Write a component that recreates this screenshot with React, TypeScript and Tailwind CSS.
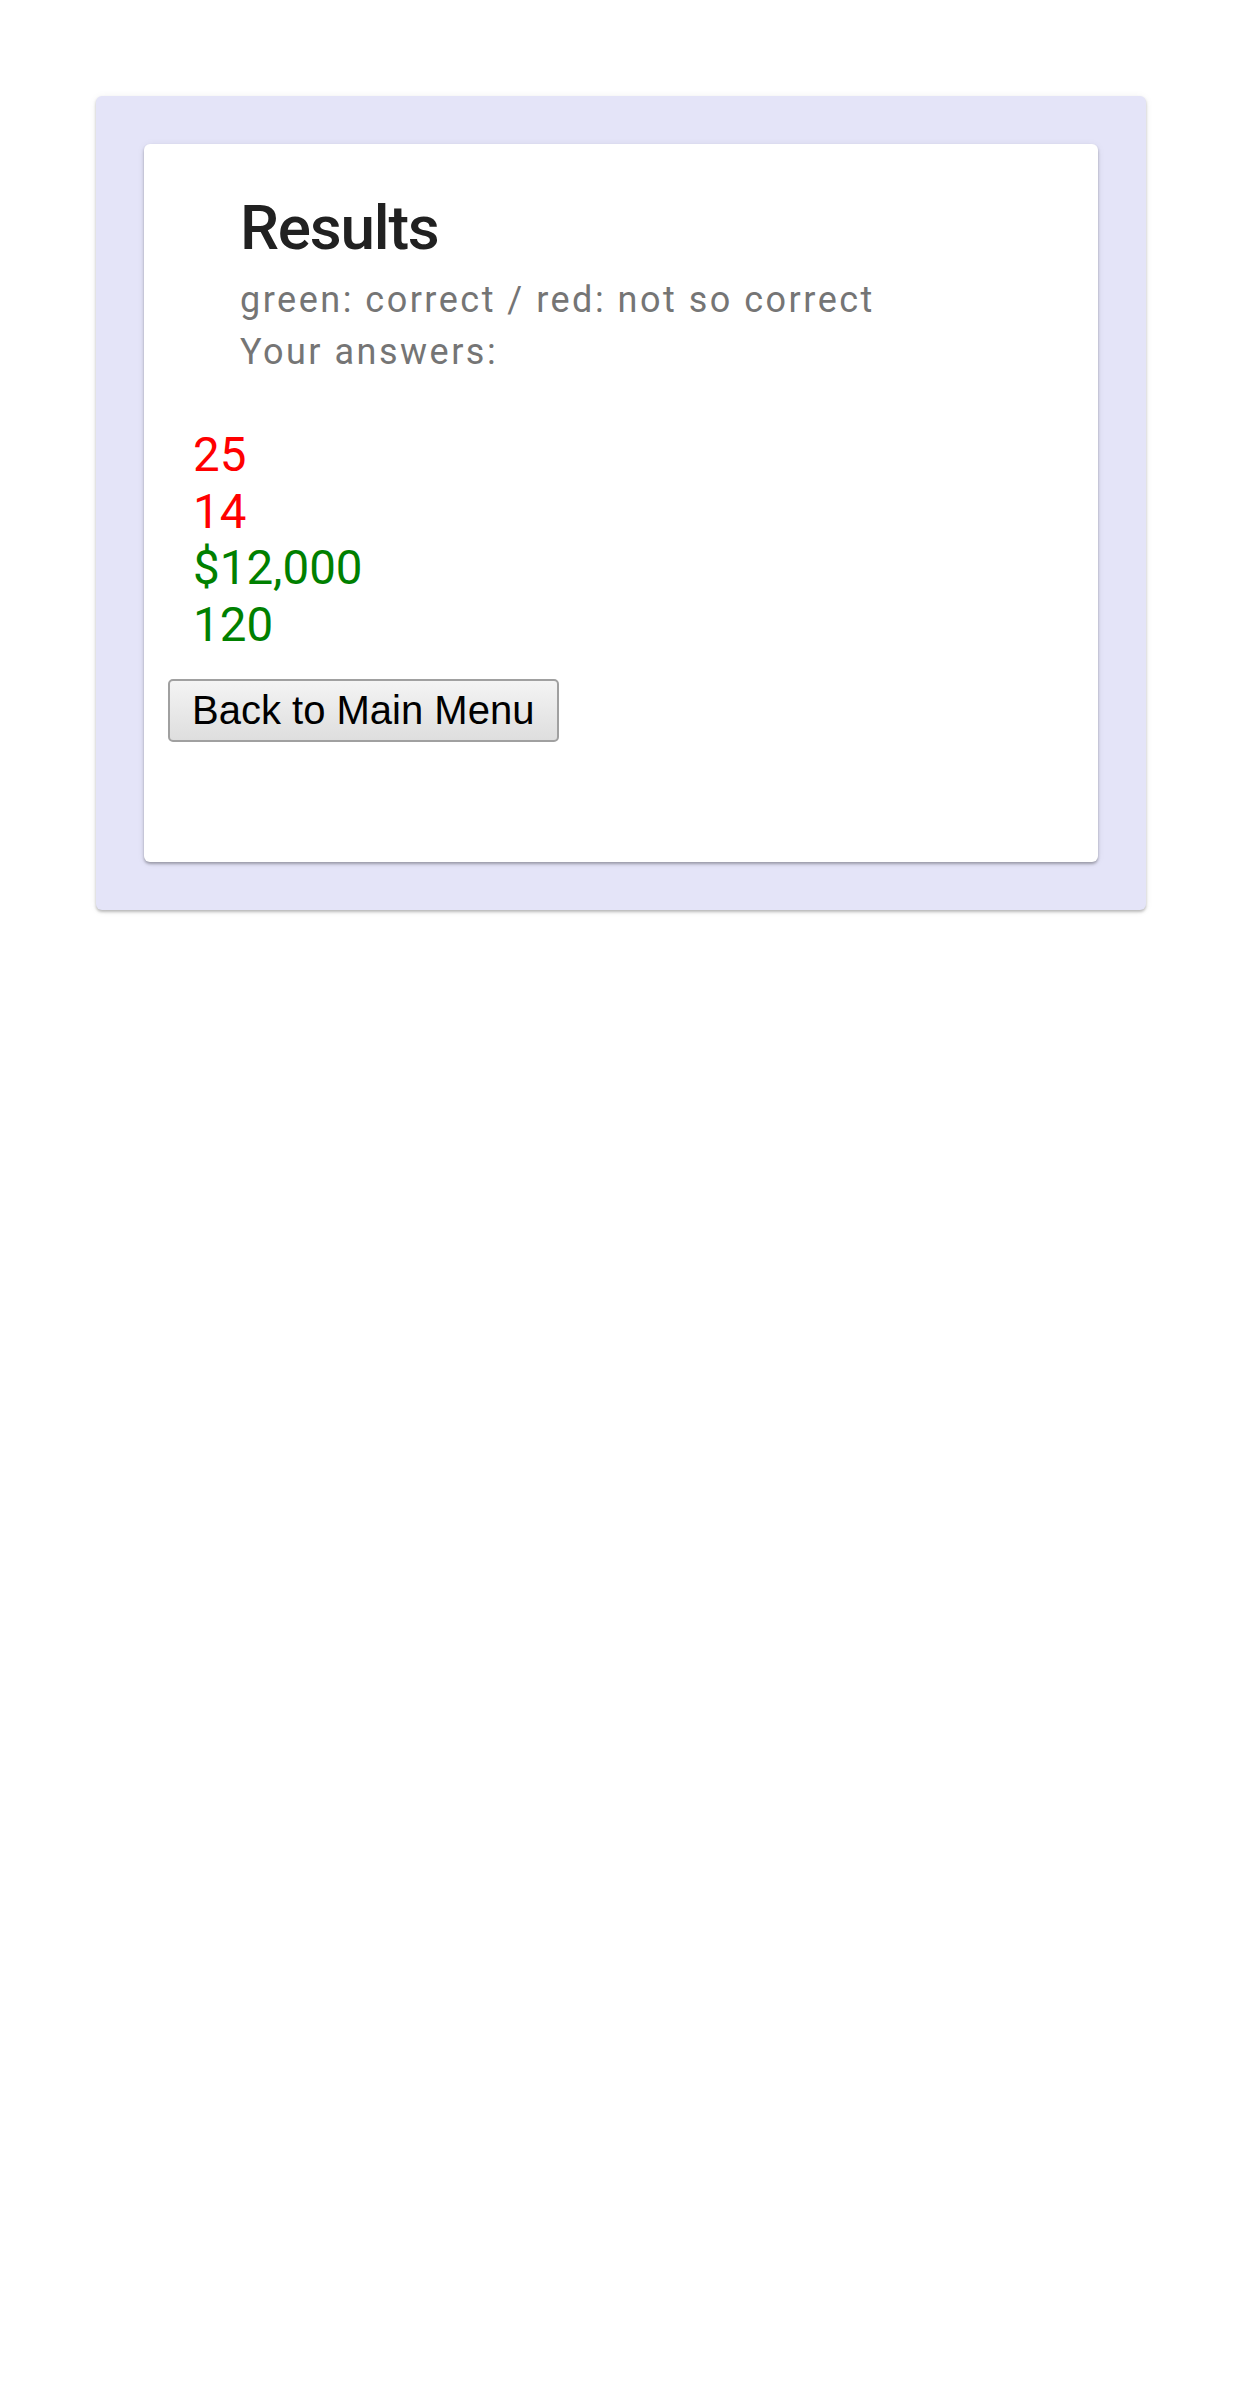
export default function App() {
  const answers = [
    { value: '25', correct: false },
    { value: '14', correct: false },
    { value: '$12,000', correct: true },
    { value: '120', correct: true },
  ];

  return (
    <div className="min-h-[2400px] bg-white pt-[96px] px-[96px]" style={{ fontFamily: 'Roboto, "Helvetica Neue", Arial, sans-serif' }}>
      {/* outer lavender paper */}
      <div className="bg-[#e4e4f8] rounded-md p-[48px] shadow-[0_2px_3px_rgba(0,0,0,0.25),0_1px_8px_rgba(0,0,0,0.06)]">
        {/* inner card */}
        <div className="bg-white rounded-md pt-[42px] pb-[120px] px-[24px] shadow-[0_2px_3px_rgba(0,0,0,0.3),0_1px_8px_rgba(0,0,0,0.06)]">
          <div className="pl-[72px]">
            <h1 className="text-[62px] leading-[84px] font-medium tracking-[-1.2px] text-[#212121]">Results</h1>
            <p className="mt-[4px] text-[36px] leading-[52px] tracking-[2.5px] text-[#757575]">
              green: correct / red: not so correct
              <br />
              Your answers:
            </p>
          </div>

          <ul className="mt-[49px] pl-[25px]">
            {answers.map((a) => (
              <li
                key={a.value}
                className={`text-[47.5px] leading-[56.7px] ${a.correct ? 'text-[#008000]' : 'text-[#ff0000]'}`}
              >
                {a.value}
              </li>
            ))}
          </ul>

          <button
            className="mt-[25px] w-[391px] h-[63px] border-[2.5px] border-[#a0a0a0] rounded-[5px] bg-gradient-to-b from-[#f4f4f4] to-[#dedede] text-black text-[40px] leading-none text-left pl-[22px]"
            style={{ fontFamily: '"Liberation Sans", Arial, sans-serif' }}
          >
            Back to Main Menu
          </button>
        </div>
      </div>
    </div>
  );
}
